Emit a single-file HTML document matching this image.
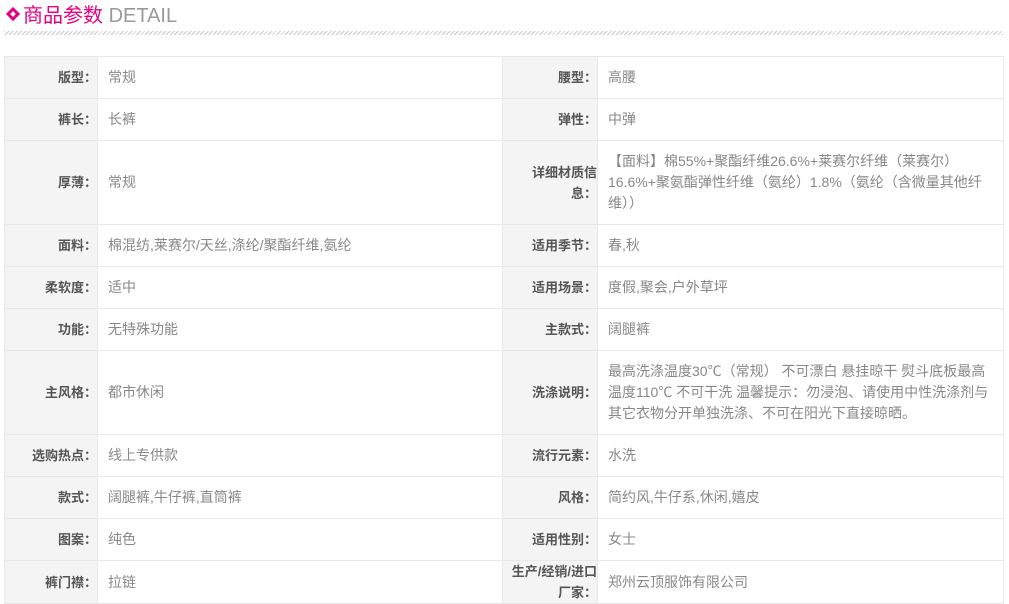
<!DOCTYPE html>
<html><head><meta charset="utf-8"><style>
*{margin:0;padding:0;box-sizing:border-box}
body{width:1009px;height:602px;overflow:hidden;background:#fff;font-family:"Liberation Sans","Noto Sans CJK SC",sans-serif}
.hd{position:absolute;left:4px;top:4px;height:24px;font-size:20px;line-height:24px;white-space:nowrap}
.dia{display:inline-block;width:10px;height:10px;border:3px solid #e4007f;transform:rotate(45deg);margin:0 5px 0 4px;vertical-align:3px}
.cn{color:#e4007f}.en{color:#999}
.hatch{position:absolute;left:4px;top:31px;width:999px;height:4px;background:repeating-linear-gradient(135deg,#c8c8c8 0 1px,#fff 1px 3px)}
table{position:absolute;left:4px;top:56px;width:999px;border-collapse:collapse;table-layout:fixed}
td{border:1px solid #e8e8e8;line-height:21px;vertical-align:middle}
td.l{background:#f4f4f4;color:#555;font-weight:bold;text-align:right;padding:0 0 0 2px;font-size:13px}
td.v{color:#888;padding:0 12px 0 10px;font-size:14px}
tr{height:42px}tr.t{height:84px}
</style></head><body>
<div class="hd"><span class="dia"></span><span class="cn">商品参数</span> <span class="en">DETAIL</span></div>
<div class="hatch"></div>
<table>
<colgroup><col style="width:93px"><col style="width:405px"><col style="width:95px"><col style="width:406px"></colgroup>
<tr><td class="l">版型：</td><td class="v">常规</td><td class="l">腰型：</td><td class="v">高腰</td></tr>
<tr><td class="l">裤长：</td><td class="v">长裤</td><td class="l">弹性：</td><td class="v">中弹</td></tr>
<tr class="t"><td class="l">厚薄：</td><td class="v">常规</td><td class="l">详细材质信<br>息：</td><td class="v">【面料】棉55%+聚酯纤维26.6%+莱赛尔纤维（莱赛尔）16.6%+聚氨酯弹性纤维（氨纶）1.8%（氨纶（含微量其他纤维））</td></tr>
<tr><td class="l">面料：</td><td class="v">棉混纺,莱赛尔/天丝,涤纶/聚酯纤维,氨纶</td><td class="l">适用季节：</td><td class="v">春,秋</td></tr>
<tr><td class="l">柔软度：</td><td class="v">适中</td><td class="l">适用场景：</td><td class="v">度假,聚会,户外草坪</td></tr>
<tr><td class="l">功能：</td><td class="v">无特殊功能</td><td class="l">主款式：</td><td class="v">阔腿裤</td></tr>
<tr class="t"><td class="l">主风格：</td><td class="v">都市休闲</td><td class="l">洗涤说明：</td><td class="v">最高洗涤温度30℃（常规） 不可漂白 悬挂晾干 熨斗底板最高温度110℃ 不可干洗 温馨提示：勿浸泡、请使用中性洗涤剂与其它衣物分开单独洗涤、不可在阳光下直接晾晒。</td></tr>
<tr><td class="l">选购热点：</td><td class="v">线上专供款</td><td class="l">流行元素：</td><td class="v">水洗</td></tr>
<tr><td class="l">款式：</td><td class="v">阔腿裤,牛仔裤,直筒裤</td><td class="l">风格：</td><td class="v">简约风,牛仔系,休闲,嬉皮</td></tr>
<tr><td class="l">图案：</td><td class="v">纯色</td><td class="l">适用性别：</td><td class="v">女士</td></tr>
<tr><td class="l">裤门襟：</td><td class="v">拉链</td><td class="l">生产/经销/进口<br>厂家：</td><td class="v">郑州云顶服饰有限公司</td></tr>
</table>
</body></html>
